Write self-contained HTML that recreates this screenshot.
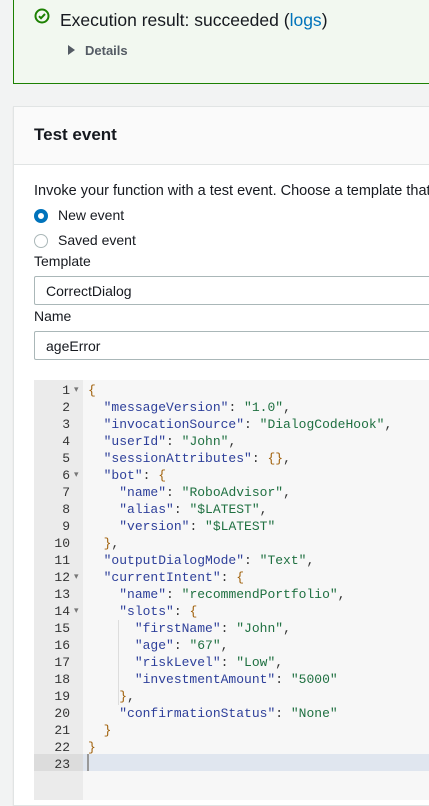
<!DOCTYPE html>
<html><head><meta charset="utf-8"><style>
*{margin:0;padding:0;box-sizing:border-box}
body{width:429px;height:776px;overflow:hidden;background:#f2f3f3;font-family:"Liberation Sans",Arial,sans-serif;position:relative}
.res{position:absolute;left:13px;top:-10px;width:430px;height:94px;background:#f2f8f0;border:1px solid #1d8102}
.res .t{position:absolute;left:46px;top:19px;font-size:17.5px;color:#16191f}
.res .t a{color:#0073bb;text-decoration:none}
.res svg{position:absolute;left:20px;top:17px}
.det{position:absolute;left:71px;top:52px;font-size:13px;font-weight:bold;color:#545b64}
.det:before{content:"";position:absolute;left:-17px;top:2px;border-left:7px solid #545b64;border-top:5px solid transparent;border-bottom:5px solid transparent}
.card{position:absolute;left:13px;top:106px;width:430px;height:700px;background:#fff;border:1px solid #e1e4e4;box-shadow:0 1px 1px rgba(0,0,0,.1)}
.hd{height:58px;background:#fafafa;border-bottom:1px solid #e1e4e4;padding:18px 0 0 20px;font-size:17px;font-weight:bold;color:#16191f}
.lbl{position:absolute;font-size:14px;color:#16191f;white-space:nowrap}
.radio{position:absolute;left:20px;width:14px;height:14px;border-radius:50%;border:1px solid #aab7b8;background:#fff}
.radio.on{border:4px solid #0073bb}
.inp{position:absolute;left:20px;width:420px;height:29px;border:1px solid #aab7b8;border-radius:2px;padding:6px 0 0 11px;font-size:14px;color:#16191f}
.ed{position:absolute;left:20px;top:273px;width:420px;height:420px;background:#f7f7f7}
.gut{position:absolute;left:0;top:0;width:49px;height:420px;background:#ebebeb}
.code{position:absolute;left:-2px;top:2px;font-family:"Liberation Mono",monospace;font-size:13px;line-height:17px}
.ln{display:block;height:17px;white-space:pre;position:relative}
.n{display:inline-block;width:38px;text-align:right;color:#333;margin-right:18px}
.f{position:absolute;left:42px;top:0;color:#777;font-size:9px}
.k{color:#2d3f9a}.s{color:#1f7041}.b{color:#a0600a}.p{color:#333}
.cur{position:absolute;left:0;top:374px;width:420px;height:17px;background:#e0e6ef}
.cur2{position:absolute;left:0;top:374px;width:49px;height:17px;background:#dcdcdc}
.caret{position:absolute;left:53px;top:374px;width:2px;height:17px;background:#999}
.g{position:absolute;width:1px;background:#ddd}
</style></head><body>
<div class="res">
<svg width="16" height="16" viewBox="0 0 16 16"><circle cx="8" cy="8" r="6.5" fill="none" stroke="#1d8102" stroke-width="2"/><path d="M5 8.2l2 2 4-4.2" fill="none" stroke="#1d8102" stroke-width="2"/></svg>
<div class="t">Execution result: succeeded (<a>logs</a>)</div>
<div class="det">Details</div>
</div>
<div class="card">
<div class="hd">Test event</div>
<div class="lbl" style="left:20px;top:76px;font-size:14.5px">Invoke your function with a test event. Choose a template that</div>
<div class="radio on" style="top:102px"></div><div class="lbl" style="left:44px;top:100px;font-size:14px">New event</div>
<div class="radio" style="top:127px"></div><div class="lbl" style="left:44px;top:125px;font-size:14px">Saved event</div>
<div class="lbl" style="left:20px;top:146px">Template</div>
<div class="inp" style="top:169px">CorrectDialog</div>
<div class="lbl" style="left:20px;top:201px">Name</div>
<div class="inp" style="top:224px">ageError</div>
<div class="ed">
<div class="gut"></div><div class="cur"></div><div class="cur2"></div><div class="caret"></div>
<div class="g" style="left:84px;top:240px;height:85px"></div>
<div class="code">
<span class="ln"><span class="n">1</span><span class="f">▾</span><span class="b">{</span></span>
<span class="ln"><span class="n">2</span>  <span class="k">"messageVersion"</span><span class="p">: </span><span class="s">"1.0"</span><span class="p">,</span></span>
<span class="ln"><span class="n">3</span>  <span class="k">"invocationSource"</span><span class="p">: </span><span class="s">"DialogCodeHook"</span><span class="p">,</span></span>
<span class="ln"><span class="n">4</span>  <span class="k">"userId"</span><span class="p">: </span><span class="s">"John"</span><span class="p">,</span></span>
<span class="ln"><span class="n">5</span>  <span class="k">"sessionAttributes"</span><span class="p">: </span><span class="b">{}</span><span class="p">,</span></span>
<span class="ln"><span class="n">6</span><span class="f">▾</span>  <span class="k">"bot"</span><span class="p">: </span><span class="b">{</span></span>
<span class="ln"><span class="n">7</span>    <span class="k">"name"</span><span class="p">: </span><span class="s">"RoboAdvisor"</span><span class="p">,</span></span>
<span class="ln"><span class="n">8</span>    <span class="k">"alias"</span><span class="p">: </span><span class="s">"$LATEST"</span><span class="p">,</span></span>
<span class="ln"><span class="n">9</span>    <span class="k">"version"</span><span class="p">: </span><span class="s">"$LATEST"</span></span>
<span class="ln"><span class="n">10</span>  <span class="b">}</span><span class="p">,</span></span>
<span class="ln"><span class="n">11</span>  <span class="k">"outputDialogMode"</span><span class="p">: </span><span class="s">"Text"</span><span class="p">,</span></span>
<span class="ln"><span class="n">12</span><span class="f">▾</span>  <span class="k">"currentIntent"</span><span class="p">: </span><span class="b">{</span></span>
<span class="ln"><span class="n">13</span>    <span class="k">"name"</span><span class="p">: </span><span class="s">"recommendPortfolio"</span><span class="p">,</span></span>
<span class="ln"><span class="n">14</span><span class="f">▾</span>    <span class="k">"slots"</span><span class="p">: </span><span class="b">{</span></span>
<span class="ln"><span class="n">15</span>      <span class="k">"firstName"</span><span class="p">: </span><span class="s">"John"</span><span class="p">,</span></span>
<span class="ln"><span class="n">16</span>      <span class="k">"age"</span><span class="p">: </span><span class="s">"67"</span><span class="p">,</span></span>
<span class="ln"><span class="n">17</span>      <span class="k">"riskLevel"</span><span class="p">: </span><span class="s">"Low"</span><span class="p">,</span></span>
<span class="ln"><span class="n">18</span>      <span class="k">"investmentAmount"</span><span class="p">: </span><span class="s">"5000"</span></span>
<span class="ln"><span class="n">19</span>    <span class="b">}</span><span class="p">,</span></span>
<span class="ln"><span class="n">20</span>    <span class="k">"confirmationStatus"</span><span class="p">: </span><span class="s">"None"</span></span>
<span class="ln"><span class="n">21</span>  <span class="b">}</span></span>
<span class="ln"><span class="n">22</span><span class="b">}</span></span>
<span class="ln"><span class="n">23</span></span>
</div>
</div>
</div>
</body></html>
